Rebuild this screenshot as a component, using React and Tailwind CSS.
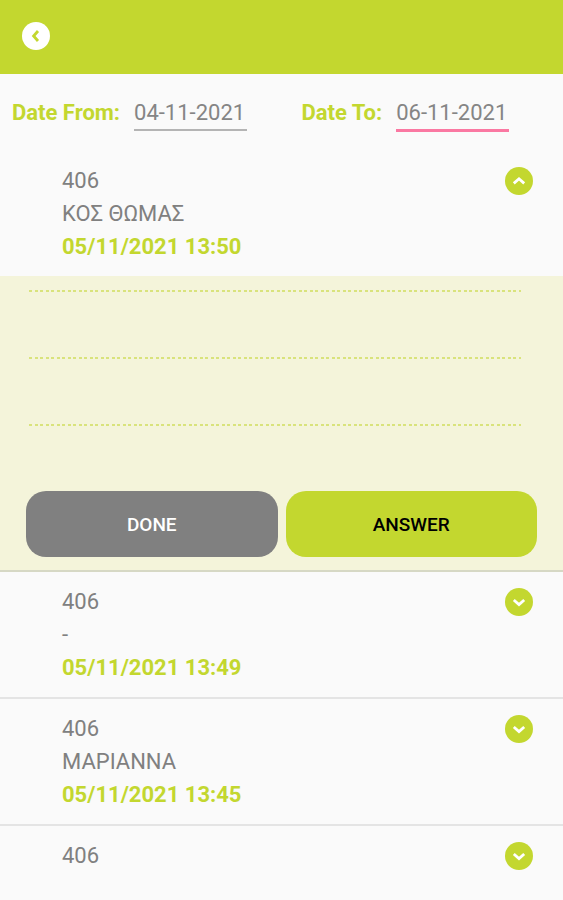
const requests = [
  { id: 1, room: '406', name: 'ΚΟΣ ΘΩΜΑΣ', time: '05/11/2021 13:50', open: true },
  { id: 2, room: '406', name: '-', time: '05/11/2021 13:49' },
  { id: 3, room: '406', name: 'ΜΑΡΙΑΝΝΑ', time: '05/11/2021 13:45' },
  { id: 4, room: '406', name: '', time: '' },
];

function RoundChevron({ d, className, stroke }) {
  return (
    <svg viewBox="0 0 28 28" className={className} aria-hidden="true">
      <circle cx="14" cy="14" r="14" fill="currentColor" />
      <path d={d} fill="none" stroke={stroke} strokeWidth="2.8" strokeLinejoin="miter" />
    </svg>
  );
}

function DateField({ id, label, value, line }) {
  return (
    <div className="flex items-start">
      <label htmlFor={id} className="mr-3.5 whitespace-nowrap text-[22px] leading-[26px] font-bold text-[#c3d72f]">
        {label}
      </label>
      <div className={`pb-[3px] ${line}`}>
        <input
          id={id}
          defaultValue={value}
          className="block h-[26px] w-[113px] bg-transparent text-[22px] leading-[26px] text-[#858585] outline-none"
        />
      </div>
    </div>
  );
}

function RequestRow({ item }) {
  return (
    <div className="flex items-start justify-between pt-3 pr-[30px] pb-[13px] pl-[62px]">
      <div className="min-h-[99px] text-[22px] leading-[33px] text-[#808080]">
        <p>{item.room}</p>
        {item.name && <p>{item.name}</p>}
        {item.time && <p className="font-bold text-[#c3d72f]">{item.time}</p>}
      </div>
      <button type="button" aria-label={item.open ? 'Collapse' : 'Expand'} className="mt-[3px] size-7">
        <RoundChevron
          className="size-7 text-[#c3d72f]"
          stroke="#fff"
          d={item.open ? 'M8.8 16.4 L14 11.8 L19.2 16.4' : 'M8.8 12 L14 16.6 L19.2 12'}
        />
      </button>
    </div>
  );
}

function DottedRule() {
  return (
    <div className="mr-4 ml-[3px] h-[67px]">
      <div className="h-0.5 bg-[repeating-linear-gradient(to_right,#d9e37c_0_3px,transparent_3px_6px,#d9e37c_6px_9px,transparent_9px_11px)]" />
    </div>
  );
}

function RequestDetails() {
  return (
    <div className="bg-[#f4f4da] px-[26px] pt-3.5 pb-[13px]">
      <DottedRule />
      <DottedRule />
      <DottedRule />
      <div className="grid grid-cols-2 gap-2 text-[19px] font-medium">
        <button type="button" className="h-[66px] rounded-[20px] bg-[#808080] pt-0.5 text-white">DONE</button>
        <button type="button" className="h-[66px] rounded-[20px] bg-[#c3d72f] pt-0.5 text-black">ANSWER</button>
      </div>
    </div>
  );
}

export default function App() {
  return (
    <div className="h-screen overflow-hidden bg-[#fafafa] font-['Roboto',sans-serif]">
      <header className="flex h-[74px] items-center bg-[#c3d72f] px-[22px] pb-0.5">
        <button type="button" aria-label="Back" className="size-7">
          <RoundChevron className="size-7 text-white" stroke="#c3d72f" d="M16 9 L11.6 14 L16 19" />
        </button>
      </header>
      <div className="grid h-[78px] grid-cols-2 gap-x-7 pt-[26px] pl-3">
        <DateField id="from" label="Date From:" value="04-11-2021" line="border-b-2 border-[#b4b4b4]" />
        <DateField id="to" label="Date To:" value="06-11-2021" line="border-b-3 border-[#fa78a2]" />
      </div>
      <ul>
        {requests.map((item) => (
          <li key={item.id} className={`border-b-2 pt-px first:pt-0 ${item.open ? 'border-[#d6d8c4]' : 'border-[#e4e4e4]'}`}>
            <RequestRow item={item} />
            {item.open && <RequestDetails />}
          </li>
        ))}
      </ul>
    </div>
  );
}
